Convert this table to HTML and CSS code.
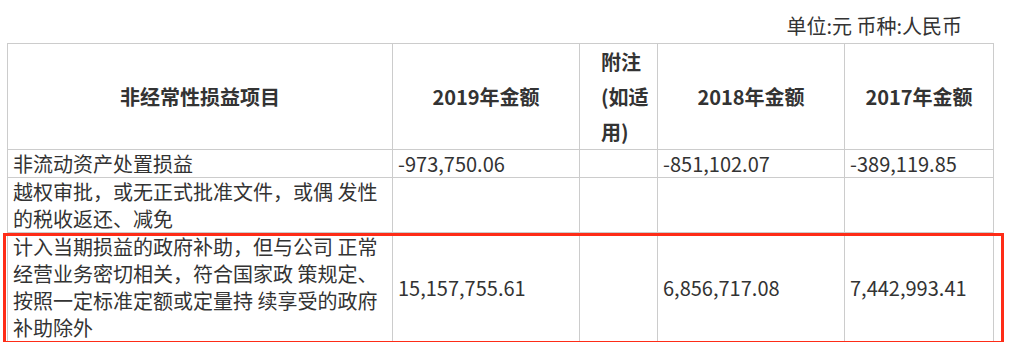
FILE: index.html
```html
<!DOCTYPE html>
<html lang="zh-CN">
<head>
<meta charset="utf-8">
<title>非经常性损益项目</title>
<link rel="stylesheet" href="styles.css">
</head>
<body>
<div class="page">
  <div class="unit">单位:元 币种:人民币</div>
  <table class="sheet">
    <colgroup>
      <col class="c1">
      <col class="c2">
      <col class="c3">
      <col class="c4">
      <col class="c5">
    </colgroup>
    <thead>
      <tr>
        <th>非经常性损益项目</th>
        <th>2019年金额</th>
        <th class="note">附注<br>(如适<br>用)</th>
        <th>2018年金额</th>
        <th>2017年金额</th>
      </tr>
    </thead>
    <tbody>
      <tr>
        <td>非流动资产处置损益</td>
        <td>-973,750.06</td>
        <td></td>
        <td>-851,102.07</td>
        <td>-389,119.85</td>
      </tr>
      <tr>
        <td>越权审批，或无正式批准文件，或偶 发性<br>的税收返还、减免</td>
        <td></td>
        <td></td>
        <td></td>
        <td></td>
      </tr>
      <tr>
        <td>计入当期损益的政府补助，但与公司 正常<br>经营业务密切相关，符合国家政 策规定、<br>按照一定标准定额或定量持 续享受的政府<br>补助除外</td>
        <td>15,157,755.61</td>
        <td></td>
        <td>6,856,717.08</td>
        <td>7,442,993.41</td>
      </tr>
    </tbody>
  </table>
  <div class="highlight"></div>
</div>
</body>
</html>
```

FILE: styles.css
```css
html, body {
  margin: 0;
  padding: 0;
  background: #ffffff;
}

.page {
  position: relative;
  padding-left: 7px;
  font-family: "Noto Sans CJK SC", "Noto Sans", sans-serif;
  font-size: 20px;
  color: #333333;
}

.unit {
  width: 986px;
  box-sizing: border-box;
  padding-top: 12px;
  padding-right: 31px;
  margin-bottom: 4px;
  line-height: 27px;
  text-align: right;
}

.sheet {
  border-collapse: collapse;
  table-layout: fixed;
  width: 986px;
}

.c1 { width: 385px; }
.c2 { width: 187px; }
.c3 { width: 78px; }
.c4 { width: 187px; }
.c5 { width: 149px; }

.sheet th,
.sheet td {
  border: 1px solid #cccccc;
  vertical-align: middle;
}

.sheet th {
  font-weight: 700;
  line-height: 35px;
  padding: 0;
  text-align: center;
}

.sheet th.note {
  text-align: left;
  padding-left: 21px;
}

.sheet td {
  line-height: 27px;
  padding: 0 4px 0 5px;
  text-align: left;
  white-space: nowrap;
}

.highlight {
  position: absolute;
  left: 3px;
  top: 233px;
  width: 1001px;
  height: 111px;
  box-sizing: border-box;
  border: 3px solid #fe2c17;
  pointer-events: none;
}
```
